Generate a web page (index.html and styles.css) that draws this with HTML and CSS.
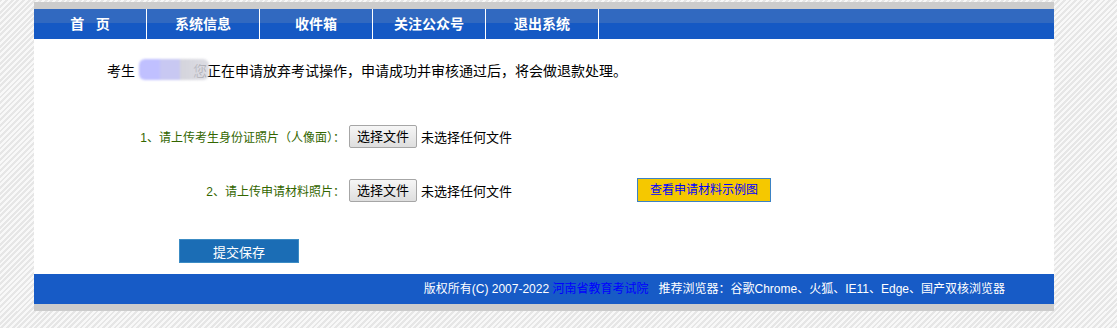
FILE: index.html
```html
<!DOCTYPE html>
<html lang="zh-CN">
<head>
    <meta charset="UTF-8">
    <title>放弃考试申请</title>
    <link rel="stylesheet" href="styles.css">
</head>
<body>
    <div class="wrapper">
        <ul class="nav">
            <li><a href="#">首&nbsp;&nbsp;&nbsp;页</a></li>
            <li><a href="#">系统信息</a></li>
            <li><a href="#">收件箱</a></li>
            <li><a href="#">关注公众号</a></li>
            <li><a href="#">退出系统</a></li>
        </ul>

        <div class="content">
            <p class="intro">考生 <span class="name"></span>您正在申请放弃考试操作，申请成功并审核通过后，将会做退款处理。</p>

            <form id="giveupForm">
                <div class="row">
                    <span class="label">1、请上传考生身份证照片（人像面）：</span>
                    <label class="file-btn">选择文件</label>
                    <span class="file-name">未选择任何文件</span>
                </div>
                <div class="row">
                    <span class="label">2、请上传申请材料照片：</span>
                    <label class="file-btn">选择文件</label>
                    <span class="file-name">未选择任何文件</span>
                    <a href="#" class="sample-btn">查看申请材料示例图</a>
                </div>
                <button type="submit" class="submit-btn">提交保存</button>
            </form>
        </div>

        <div class="footer">
            版权所有(C) 2007-2022 <a href="#">河南省教育考试院</a>&nbsp;&nbsp; 推荐浏览器：谷歌Chrome、火狐、IE11、Edge、国产双核浏览器
        </div>
    </div>
</body>
</html>
```

FILE: styles.css
```css
/* 通用 */
body {
    margin: 0;
    padding: 2px 0 0;
    font-family: "Liberation Sans", "Noto Sans CJK SC", sans-serif;
    background: repeating-linear-gradient(135deg, #e6e6e6 0, #e6e6e6 2px, #f8f8f8 2px, #f8f8f8 4px);
}

.wrapper {
    width: 1020px;
    margin-left: 34px;
    background: #fff;
    border-top: 7px solid #cccccc;
    border-bottom: 7px solid #cccccc;
}

/* 导航 */
.nav {
    display: flex;
    list-style: none;
    margin: 0;
    padding: 0;
    height: 30px;
    background: linear-gradient(#3169c0 0, #3169c0 14px, #1559c4 14px, #1559c4 30px);
}

.nav li {
    width: 112px;
    border-right: 1px solid #fff;
}

.nav a {
    display: block;
    line-height: 30px;
    text-align: center;
    color: #fff;
    font-size: 14px;
    font-weight: bold;
    text-decoration: none;
}

/* 内容 */
.content {
    height: 235px;
    box-sizing: border-box;
    padding-top: 22px;
}

.intro {
    margin: 0;
    padding-left: 73px;
    font-size: 14px;
    line-height: 20px;
    color: #000;
}

.name {
    position: relative;
    display: inline-block;
    width: 54px;
    height: 14px;
}

.name::after {
    content: "";
    position: absolute;
    left: 0;
    top: -3px;
    width: 70px;
    height: 21px;
    background: linear-gradient(90deg, #c0c0ff 0, #c0c0ff 30%, #c8c8f2 30%, #c8c8f2 58%, #d4d4dc 58%, rgba(212, 212, 220, 0.8) 100%);
    filter: blur(1.2px);
    border-radius: 6px;
}

#giveupForm {
    margin-top: 43px;
}

.row {
    display: flex;
    align-items: center;
    height: 24px;
    margin-bottom: 30px;
}

.label {
    width: 311px;
    text-align: right;
    font-size: 12px;
    color: #336600;
}

.file-btn {
    margin-left: 4px;
    box-sizing: border-box;
    width: 68px;
    height: 23px;
    line-height: 21px;
    text-align: center;
    font-size: 13px;
    color: #000;
    background: linear-gradient(#f6f6f6, #dedede);
    border: 1px solid #a6a6a6;
    border-radius: 2px;
}

.file-name {
    margin-left: 4px;
    font-size: 13px;
    color: #000;
}

.sample-btn {
    margin-left: 125px;
    box-sizing: border-box;
    width: 134px;
    height: 24px;
    line-height: 22px;
    text-align: center;
    font-size: 12px;
    color: #0000ff;
    text-decoration: none;
    background-color: #f5c800;
    border: 1px solid #3b82c4;
}

.submit-btn {
    display: block;
    margin: 37px 0 0 145px;
    width: 120px;
    height: 24px;
    padding: 0;
    font-family: inherit;
    font-size: 13px;
    color: #fff;
    background-color: #1b6db5;
    border: 1px solid #3c8cc4;
    cursor: pointer;
}

/* 页脚 */
.footer {
    height: 30px;
    line-height: 30px;
    padding-right: 49px;
    text-align: right;
    font-size: 12px;
    color: #fff;
    background-color: #175bc6;
}

.footer a {
    color: #0000ff;
    text-decoration: none;
}
```
